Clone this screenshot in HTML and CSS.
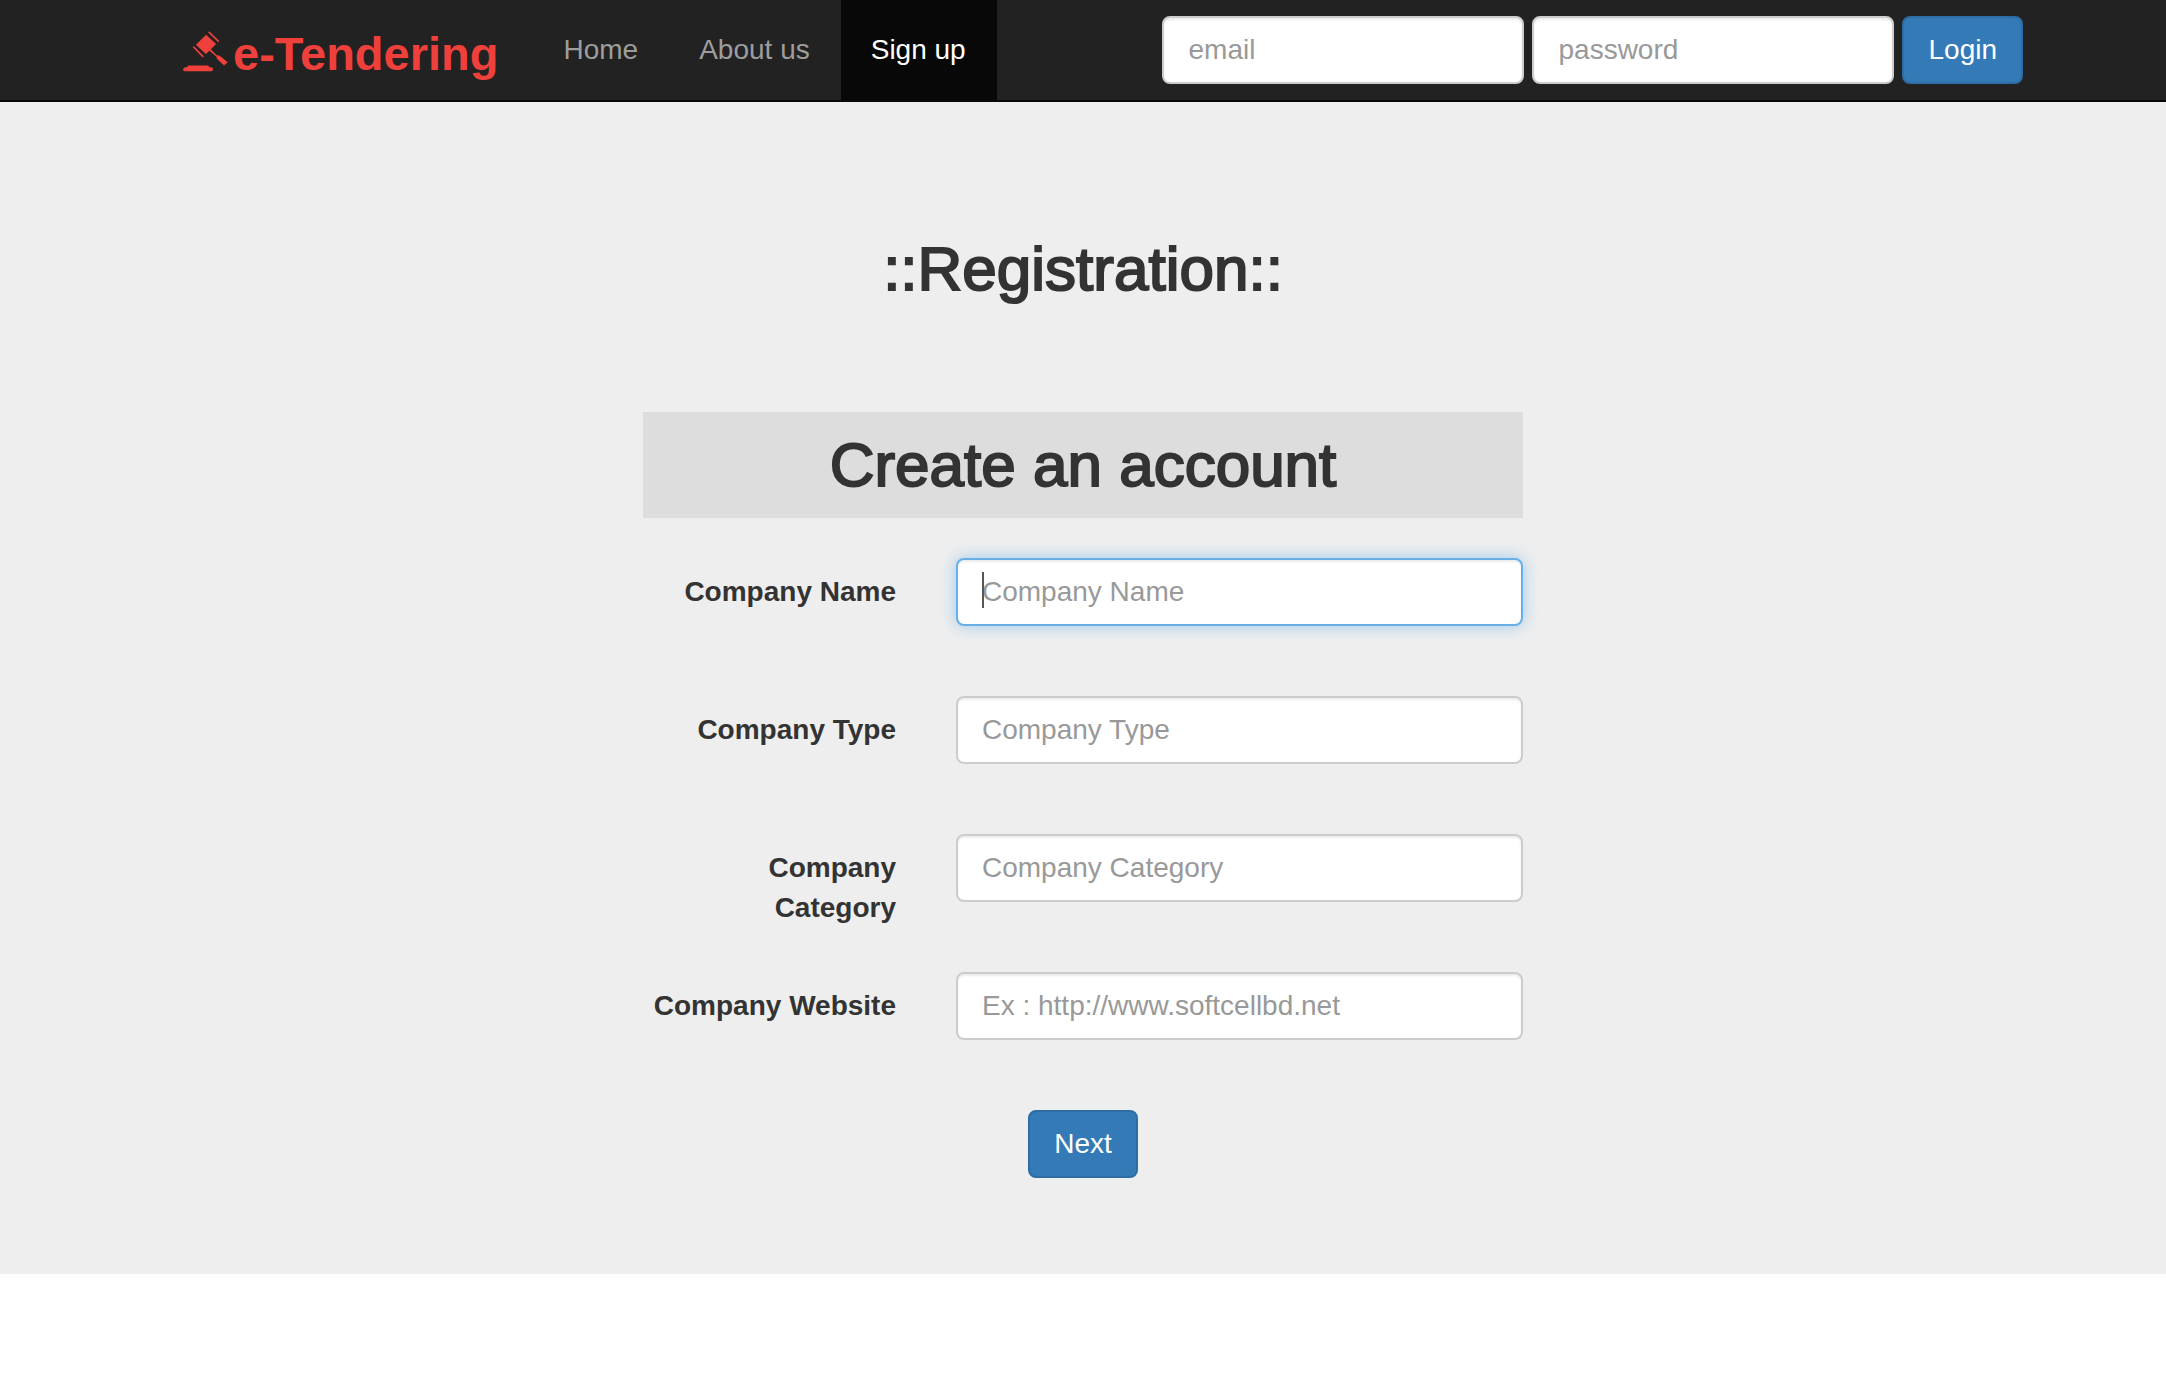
FILE: index.html
```html
<!DOCTYPE html>
<html lang="en">
<head>
  <meta charset="utf-8">
  <meta name="viewport" content="width=device-width, initial-scale=1">
  <title>e-Tendering</title>
  <link rel="stylesheet" href="styles.css">
</head>
<body>
  <header class="navbar">
    <div class="container">
      <a class="brand" href="#">
        <svg class="brand-icon" viewBox="68 92 136 123" aria-hidden="true">
          <path d="M147 95.500L174.500 122M100.500 140.500L128 168" fill="none" stroke="currentColor" stroke-width="5" stroke-linecap="round"/>
          <path d="M138 103L168 131L152 147L170 165Q178 164 184 170L203 186L192 196L176 181Q169 175 169 169L148 151L137 161L107 133Z" fill="currentColor"/>
          <path d="M84 196H144L148 201H154Q159 202 159 208Q158 213 154 213H73Q68 213 68 208Q69 202 75 201H80Z" fill="currentColor"/>
        </svg>
        <span class="brand-name">e-Tendering</span>
      </a>
      <nav class="nav">
        <a class="nav-link" href="#">Home</a>
        <a class="nav-link" href="#">About us</a>
        <a class="nav-link active" href="#" aria-current="page">Sign up</a>
      </nav>
      <form class="login">
        <input class="control" type="email" placeholder="email" aria-label="email">
        <input class="control" type="password" placeholder="password" aria-label="password">
        <button class="btn" type="submit">Login</button>
      </form>
    </div>
  </header>

  <main class="page">
    <h1 class="title">::Registration::</h1>
    <form class="register">
      <h2 class="title band">Create an account</h2>
      <div class="row">
        <label class="label" for="name">Company Name</label>
        <div class="field">
          <input class="control current" id="name" type="text" placeholder="Company Name">
          <span class="caret"></span>
        </div>
      </div>
      <div class="row">
        <label class="label" for="type">Company Type</label>
        <div class="field"><input class="control" id="type" type="text" placeholder="Company Type"></div>
      </div>
      <div class="row">
        <label class="label" for="category">Company Category</label>
        <div class="field"><input class="control" id="category" type="text" placeholder="Company Category"></div>
      </div>
      <div class="row">
        <label class="label" for="website">Company Website</label>
        <div class="field"><input class="control" id="website" type="url" placeholder="Ex : http://www.softcellbd.net"></div>
      </div>
      <button class="btn" type="submit">Next</button>
    </form>
  </main>
</body>
</html>
```
FILE: styles.css
```css
* {
  box-sizing: border-box;
}

body {
  margin: 0;
  background: #fff;
  color: #333;
  font-family: "Helvetica Neue", "Liberation Sans", Arial, sans-serif;
  font-size: 28px;
  line-height: 40px;
}

.navbar {
  background: #222;
  border-bottom: 2px solid #080808;
}

.container {
  display: flex;
  flex-wrap: wrap;
  align-items: center;
  max-width: 1940px;
  margin: 0 auto;
  padding: 0 30px;
}

.brand {
  display: flex;
  align-items: center;
  gap: 5px;
  padding: 2px 35px 0 40px;
  color: #ef403c;
  text-decoration: none;
}

.brand-icon {
  width: 45px;
  height: 41px;
}

.brand-name {
  padding-top: 6px;
  font-size: 47px;
  font-weight: bold;
}

.nav {
  display: flex;
}

.nav-link {
  padding: 30px 31px 30px 30px;
  color: #9d9d9d;
  text-decoration: none;
}

.nav-link.active {
  background: #080808;
  color: #fff;
}

.login {
  display: flex;
  gap: 8px;
  margin-left: auto;
}

.login .control {
  width: 362px;
}

.control {
  display: block;
  width: 100%;
  height: 68px;
  padding: 12px 24px;
  border: 2px solid #ccc;
  border-radius: 8px;
  outline: 0;
  background: #fff;
  box-shadow: inset 0 2px 2px rgba(0, 0, 0, 0.075);
  color: #555;
  font: inherit;
}

.control::placeholder {
  color: #999;
  opacity: 1;
}

.control:focus,
.control.current {
  border-color: #66afe9;
  box-shadow: inset 0 2px 2px rgba(0, 0, 0, 0.075), 0 0 16px rgba(102, 175, 233, 0.6);
}

.btn {
  height: 68px;
  padding: 12px 24px;
  border: 2px solid #2e6da4;
  border-radius: 8px;
  background: #337ab7;
  color: #fff;
  font: inherit;
  cursor: pointer;
}

.page {
  padding: 134px 30px 96px;
  background: #eee;
}

.title {
  margin: 0 0 110px;
  font-size: 62px;
  font-weight: normal;
  line-height: 66px;
  text-align: center;
  -webkit-text-stroke: 2px currentColor;
}

.band {
  align-self: stretch;
  margin-bottom: 40px;
  padding: 20px;
  background: #ddd;
}

.register {
  display: flex;
  flex-direction: column;
  align-items: center;
  max-width: 880px;
  margin: 0 auto;
}

.row {
  display: flex;
  align-self: stretch;
  gap: 60px;
  height: 68px;
  margin-bottom: 70px;
}

.label {
  width: 253px;
  padding-top: 14px;
  font-weight: bold;
  text-align: right;
}

.field {
  position: relative;
  flex: 1;
}

.caret {
  position: absolute;
  top: 14px;
  left: 26px;
  width: 2px;
  height: 36px;
  background: #555;
}
```
